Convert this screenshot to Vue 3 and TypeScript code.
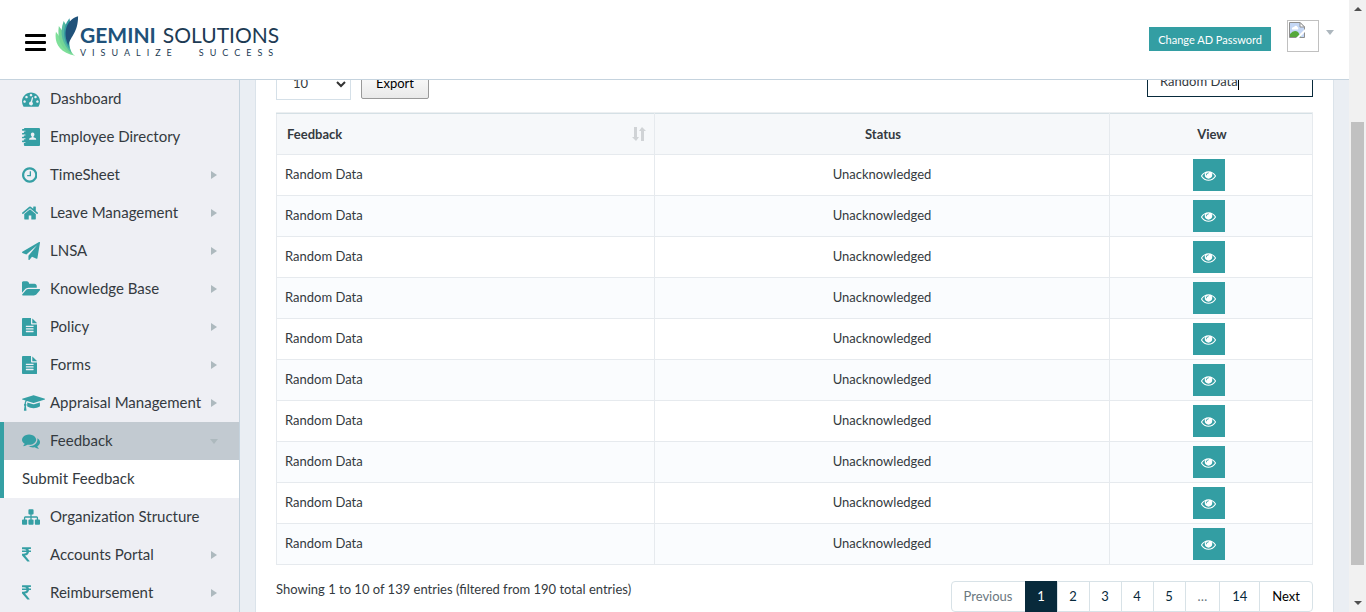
<script setup lang="ts">
import { ref } from 'vue'

interface Icon { w: number; h: number; d: string }
interface MenuItem { label: string; icon: string; arrow?: boolean; active?: boolean; child?: string }

const icons: Record<string, Icon> = {
  dashboard: { w: 1792, h: 1792, d: 'M384 1152q0-53-37.5-90.5t-90.5-37.5-90.5 37.5-37.5 90.5 37.5 90.5 90.5 37.5 90.5-37.5 37.5-90.5zm192-448q0-53-37.5-90.5t-90.5-37.5-90.5 37.5-37.5 90.5 37.5 90.5 90.5 37.5 90.5-37.5 37.5-90.5zm428 481l101-382q6-26-7.5-48.5t-38.5-29.5-48 6.5-30 39.5l-101 382q-60 5-107 43.5t-63 98.5q-20 77 20 146t117 89 146-20 89-117q16-60-6-117t-72-91zm660-33q0-53-37.5-90.5t-90.5-37.5-90.5 37.5-37.5 90.5 37.5 90.5 90.5 37.5 90.5-37.5 37.5-90.5zm-640-640q0-53-37.5-90.5t-90.5-37.5-90.5 37.5-37.5 90.5 37.5 90.5 90.5 37.5 90.5-37.5 37.5-90.5zm448 192q0-53-37.5-90.5t-90.5-37.5-90.5 37.5-37.5 90.5 37.5 90.5 90.5 37.5 90.5-37.5 37.5-90.5zm320 448q0 261-141 483-19 29-54 29h-1402q-35 0-54-29-141-221-141-483 0-182 71-348t191-286 286-191 348-71 348 71 286 191 191 286 71 348z' },
  book: { w: 1792, h: 1792, d: 'M290 0H1690q102 0 102 102V1690q0 102-102 102H290q-102 0-102-102V1500H340v-90H60q-60 0-60-60v-40q0-60 60-60H188V1120H340v-90H60q-60 0-60-60v-40q0-60 60-60H188V740H340v-90H60q-60 0-60-60v-40q0-60 60-60H188V360H340v-90H60q-60 0-60-60v-40q0-60 60-60H188q0-110 102-110zM1060 440c-105 0-180 80-180 190 0 115 50 190 100 225v65l-190 85c-60 30-80 80-80 175h700c0-95-20-145-80-175l-190-85v-65c50-35 100-110 100-225 0-110-75-190-180-190z' },
  clock: { w: 1536, h: 1792, d: 'M896 544v448q0 14-9 23t-23 9h-320q-14 0-23-9t-9-23v-64q0-14 9-23t23-9h224v-352q0-14 9-23t23-9h64q14 0 23 9t9 23zm416 352q0-148-73-273t-198-198-273-73-273 73-198 198-73 273 73 273 198 198 273 73 273-73 198-198 73-273zm224 0q0 209-103 385.5t-279.5 279.5-385.5 103-385.5-103-279.5-279.5-103-385.5 103-385.5 279.5-279.5 385.5-103 385.5 103 279.5 279.5 103 385.5z' },
  home: { w: 1600, h: 1792, d: 'M1376 992v480q0 26-19 45t-45 19h-384v-384h-256v384h-384q-26 0-45-19t-19-45v-480q0-1 .5-3t.5-3l575-474 575 474q1 2 1 6zm223-69l-62 74q-8 9-21 11h-3q-13 0-21-7l-692-577-692 577q-12 8-24 7-13-2-21-11l-62-74q-8-10-7-23.5t11-21.5l719-599q32-26 76-26t76 26l244 204v-195q0-14 9-23t23-9h192q14 0 23 9t9 23v408l219 182q10 8 11 21.5t-7 23.5z' },
  plane: { w: 1792, h: 1792, d: 'M1764 11q33 24 27 64l-256 1536q-5 29-32 45-14 8-31 8-11 0-24-5l-453-185-242 295q-18 23-49 23-13 0-22-4-19-7-30.5-23.5t-11.5-36.5v-349l864-1059-1069 925-395-162q-37-14-40-55-2-40 32-59l1664-960q15-9 32-9 20 0 36 11z' },
  folder: { w: 1815, h: 1792, d: 'M1815 952q0 31-31 66l-336 396q-43 51-120.5 86.5t-143.5 35.5h-1088q-34 0-60.5-13t-26.5-43q0-31 31-66l336-396q43-51 120.5-86.5t143.5-35.5h1088q34 0 60.5 13t26.5 43zm-343-344v160h-832q-94 0-197 47.5t-164 119.5l-337 396-5 6q0-4-.5-12.5t-.5-12.5v-960q0-92 66-158t158-66h320q92 0 158 66t66 158v32h544q92 0 158 66t66 158z' },
  file: { w: 1536, h: 1792, d: 'M1468 476q14 14 28 36h-472v-472q22 14 36 28zm-476 164h544v1056q0 40-28 68t-68 28h-1344q-40 0-68-28t-28-68v-1600q0-40 28-68t68-28h800v544q0 40 28 68t68 28zm160 736v-64q0-14-9-23t-23-9h-704q-14 0-23 9t-9 23v64q0 14 9 23t23 9h704q14 0 23-9t9-23zm0-256v-64q0-14-9-23t-23-9h-704q-14 0-23 9t-9 23v64q0 14 9 23t23 9h704q14 0 23-9t9-23zm0-256v-64q0-14-9-23t-23-9h-704q-14 0-23 9t-9 23v64q0 14 9 23t23 9h704q14 0 23-9t9-23z' },
  cap: { w: 2304, h: 1792, d: 'M1774 836l18 316q4 69-82 128t-235 93.500-323 34.500-323-34.500-235-93.500-82-128l18-316 574 181q22 7 48 7t48-7zM2304 512q0 23-22 31l-1120 352q-4 1-10 1t-10-1l-652-206q-43 34-71 111.500t-34 178.500q63 36 63 109 0 69-58 107l58 433q2 14-8 25-9 11-24 11h-192q-15 0-24-11-10-11-8-25l58-433q-58-38-58-107 0-73 65-111 11-207 98-330l-333-104q-22-8-22-31t22-31l1120-352q4-1 10-1t10 1l1120 352q22 8 22 31z' },
  comments: { w: 1792, h: 1792, d: 'M1408 768q0 139-94 257t-256.500 186.500-353.500 68.500q-86 0-176-16-124 88-278 128-36 9-86 16h-3q-11 0-20.500-8t-11.500-21q-1-3-1-6.500t.5-6.500 2-6l2.500-5 3.500-5.500 4-5 4.500-5 4-4.500q5-6 23-25t26-29.500 22.500-29 25-38.500 20.500-44q-124-72-195-177t-71-224q0-139 94-257t256.500-186.500 353.500-68.500 353.500 68.500 256.500 186.500 94 257zm384 256q0 120-71 224.500t-195 176.500q10 24 20.500 44t25 38.500 22.500 29 26 29.500 23 25q1 1 4 4.500t4.500 5 4 5 3.500 5.500l2.500 5 2 6 .5 6.500-1 6.500q-3 14-13 22t-22 7q-50-7-86-16-154-40-278-128-90 16-176 16-271 0-472-132 58 4 88 4 161 0 309-45t264-129q125-92 192-212t67-254q0-77-23-152 129 71 204 178t75 230z' },
  sitemap: { w: 1792, h: 1792, d: 'M1792 1248v320q0 40-28 68t-68 28h-320q-40 0-68-28t-28-68v-320q0-40 28-68t68-28h96v-192h-512v192h96q40 0 68 28t28 68v320q0 40-28 68t-68 28h-320q-40 0-68-28t-28-68v-320q0-40 28-68t68-28h96v-192h-512v192h96q40 0 68 28t28 68v320q0 40-28 68t-68 28h-320q-40 0-68-28t-28-68v-320q0-40 28-68t68-28h96v-192q0-52 38-90t90-38h512v-192h-96q-40 0-68-28t-28-68v-320q0-40 28-68t68-28h320q40 0 68 28t28 68v320q0 40-28 68t-68 28h-96v192h512q52 0 90 38t38 90v192h96q40 0 68 28t28 68z' },
  rupee: { w: 900, h: 1792, d: 'M898 470v102q0 14-9 23t-23 9h-168q-23 144-129 234t-276 110q167 178 459 536 14 16 4 34-8 18-29 18h-195q-16 0-25-12-306-367-498-571-9-9-9-22v-127q0-13 9.500-22.500t22.500-9.500h112q132 0 212.500-43t102.500-125h-427q-14 0-23-9t-9-23v-102q0-14 9-23t23-9h413q-57-113-268-113h-145q-13 0-22.500-9.500t-9.500-22.500v-133q0-14 9-23t23-9h832q14 0 23 9t9 23v102q0 14-9 23t-23 9h-233q47 61 64 144h171q14 0 23 9t9 23z' },
}

const menu: MenuItem[] = [
  { label: 'Dashboard', icon: 'dashboard' },
  { label: 'Employee Directory', icon: 'book' },
  { label: 'TimeSheet', icon: 'clock', arrow: true },
  { label: 'Leave Management', icon: 'home', arrow: true },
  { label: 'LNSA', icon: 'plane', arrow: true },
  { label: 'Knowledge Base', icon: 'folder', arrow: true },
  { label: 'Policy', icon: 'file', arrow: true },
  { label: 'Forms', icon: 'file', arrow: true },
  { label: 'Appraisal Management', icon: 'cap', arrow: true },
  { label: 'Feedback', icon: 'comments', arrow: true, active: true, child: 'Submit Feedback' },
  { label: 'Organization Structure', icon: 'sitemap' },
  { label: 'Accounts Portal', icon: 'rupee', arrow: true },
  { label: 'Reimbursement', icon: 'rupee', arrow: true },
]

const rows = Array.from({ length: 10 }, (_, id) => ({ id, feedback: 'Random Data', status: 'Unacknowledged' }))
const pages = ['Previous', '1', '2', '3', '4', '5', '…', '14', 'Next']
const current = ref('1')
const pageSize = ref('10')
const search = ref('Random Data')
</script>

<template>
  <div class="app">
    <div class="shell">
      <header class="topbar">
        <button class="burger" type="button" aria-label="Toggle menu"><i></i><i></i><i></i></button>
        <a class="logo" href="#" aria-label="Gemini Solutions">
          <svg class="leaf" viewBox="0 0 26 42" aria-hidden="true">
            <path d="M1 16C-1 27 4 38 21 41C12 36 9 27 1 16Z" fill="#7fe09a" />
            <path d="M4 10C2 24 6 34 19 40C13 31 13 21 4 10Z" fill="#74d596" />
            <path d="M9 5C4 18 8 30 17 38C13 27 17 15 9 5Z" fill="#54b9a1" />
            <path d="M15 2C7 12 8 24 15 34C13 23 18 12 15 2Z" fill="#359ca2" />
            <path d="M24 0C11 4 8 18 14 30C16 21 24 17 24 0Z" fill="#20527a" />
          </svg>
          <span class="words">
            <span class="name"><b>GEMINI</b><span>SOLUTIONS</span></span>
            <span class="tagline"><span>VISUALIZE</span><span>SUCCESS</span></span>
          </span>
        </a>
        <button class="password" type="button">Change AD Password</button>
        <button class="profile" type="button" aria-label="Profile">
          <span class="avatar">
            <svg viewBox="0 0 16 16" aria-hidden="true">
              <path d="M.5.5H11L15.500 5V15.500H.5Z" fill="#c4d7f5" stroke="#8f8f8f" />
              <path d="M11 .5V5H15.500Z" fill="#fff" stroke="#8f8f8f" />
              <path d="M3 7.500Q2.500 5 5 5Q7 2.500 8.500 5Q10 5.500 9 7.500Z" fill="#fff" />
              <path d="M1 15V12Q5 7 9 10L12 15Z" fill="#55a83b" />
              <path d="M7 16L16 7V10L10 16Z" fill="#fff" />
            </svg>
          </span>
          <svg class="caret" viewBox="0 0 8 5" aria-hidden="true"><path d="M0 0H8L4 5Z" /></svg>
        </button>
      </header>

      <div class="body">
        <nav class="sidebar" aria-label="Main">
          <ul>
            <li v-for="item in menu" :key="item.label" :class="{ active: item.active }">
              <a class="item" href="#">
                <span class="glyph">
                  <svg :viewBox="`0 0 ${icons[item.icon].w} ${icons[item.icon].h}`" aria-hidden="true">
                    <path :d="icons[item.icon].d" fill-rule="evenodd" />
                  </svg>
                </span>
                <span class="label">{{ item.label }}</span>
                <svg v-if="item.arrow" class="arrow" viewBox="0 0 8 8" aria-hidden="true">
                  <path :d="item.active ? 'M0 2H8L4 7Z' : 'M1 0L7 4L1 8Z'" />
                </svg>
              </a>
              <a v-if="item.child" class="child" href="#"><span class="label">{{ item.child }}</span></a>
            </li>
          </ul>
        </nav>

        <main class="content">
          <section class="panel">
            <div class="tools">
              <div class="length">
                <select v-model="pageSize" aria-label="Entries per page">
                  <option>10</option><option>25</option><option>50</option>
                </select>
                <svg viewBox="0 0 10 7" aria-hidden="true"><path d="M1 1L5 5L9 1" /></svg>
              </div>
              <button class="export" type="button">Export</button>
              <div class="search">
                <input v-model="search" type="text" aria-label="Search" />
                <i class="cursor"></i>
              </div>
            </div>

            <table>
              <colgroup><col class="c1" /><col class="c2" /><col class="c3" /></colgroup>
              <thead>
                <tr>
                  <th scope="col">
                    <div class="sortable">
                      <span>Feedback</span>
                      <svg viewBox="0 0 14 14" aria-hidden="true">
                        <path d="M2 0H5V10H7L4 14L0 10H2ZM9 14H12V4H14L10 0L7 4H9Z" />
                      </svg>
                    </div>
                  </th>
                  <th scope="col">Status</th>
                  <th scope="col">View</th>
                </tr>
              </thead>
              <tbody>
                <tr v-for="row in rows" :key="row.id">
                  <td>{{ row.feedback }}</td>
                  <td>{{ row.status }}</td>
                  <td class="action">
                    <button class="view" type="button" aria-label="View">
                      <svg viewBox="0 0 1792 1792" aria-hidden="true"><path d="M1664 960q-152-236-381-353 61 104 61 225 0 185-131.500 316.500t-316.500 131.500-316.500-131.500-131.500-316.500q0-121 61-225-229 117-381 353 133 205 333.500 326.500t434.500 121.500 434.500-121.500 333.500-326.500zm-720-384q0-20-14-34t-34-14q-125 0-214.500 89.500t-89.500 214.500q0 20 14 34t34 14 34-14 14-34q0-86 61-147t147-61q20 0 34-14t14-34zm848 384q0 34-20 69-140 230-376.500 368.500t-499.500 138.500-499.500-139-376.500-368q-20-35-20-69t20-69q140-229 376.500-368t499.500-139 499.500 139 376.500 368q20 35 20 69z" /></svg>
                    </button>
                  </td>
                </tr>
              </tbody>
            </table>

            <footer class="foot">
              <p>Showing 1 to 10 of 139 entries (filtered from 190 total entries)</p>
              <div class="pager">
                <button
                  v-for="p in pages"
                  :key="p"
                  type="button"
                  :class="{ on: p === current, muted: p === 'Previous' || p === '…', digit: /^\d$/.test(p) }"
                >{{ p }}</button>
              </div>
            </footer>
          </section>
        </main>
      </div>
    </div>

    <div class="scrollbar" aria-hidden="true">
      <svg viewBox="0 0 8 4"><path d="M0 4L4 0L8 4Z" /></svg>
      <div class="track"><div class="thumb"></div></div>
      <svg viewBox="0 0 8 4"><path d="M0 0H8L4 4Z" /></svg>
    </div>
  </div>
</template>

<style>
body { margin: 0; overflow: hidden; }
</style>

<style scoped>
* { box-sizing: border-box; }
.app { display: flex; height: 100vh; overflow: hidden; font-family: Lato, "Noto Sans", sans-serif; font-size: 13px; color: #343a40; background: #eaeef3; }
button, input, select { font: inherit; color: inherit; margin: 0; }
a { color: inherit; text-decoration: none; }
.shell { flex: 1; min-width: 0; display: flex; flex-direction: column; }

.topbar { position: relative; z-index: 2; flex: none; display: flex; align-items: flex-start; height: 80px; padding: 0 15px 0 25px; background: #fff; border-bottom: 1px solid #c5d3de; }
.burger { display: flex; flex-direction: column; gap: 4px; width: 21px; margin-top: 34px; padding: 0; border: 0; background: none; }
.burger i { height: 3px; background: #000; border-radius: 1px; }
.logo { display: flex; align-items: flex-start; margin: 16px auto 0 9px; }
.leaf { width: 25px; height: 41px; }
.words { display: flex; flex-direction: column; }
.name { display: flex; gap: 7px; margin-top: 7px; font-size: 21px; line-height: 24px; color: #1d3b54; font-weight: 400; }
.name b { color: #20527a; font-weight: 700; }
.tagline { display: flex; justify-content: space-between; font-size: 9px; line-height: 11px; letter-spacing: 6px; color: #1d3b54; }
.password { height: 24px; margin: 27px 16px 0 0; padding: 0 9px; border: 0; background: #339ea3; color: #fff; font-size: 11px; white-space: nowrap; }
.profile { display: flex; gap: 7px; margin-top: 20px; padding: 0; border: 0; background: none; }
.avatar { display: block; width: 32px; height: 32px; border: 1px solid #c0c0c0; padding: 1px; }
.avatar svg { display: block; width: 16px; height: 16px; }
.caret { width: 8px; height: 5px; margin-top: 10px; fill: #adb7be; }

.body { flex: 1; min-height: 0; display: flex; }
.sidebar { flex: none; width: 240px; border-right: 1px solid #c5d3de; background: #eeeff4; overflow: hidden; }
.sidebar ul { margin: 0; padding: 0; list-style: none; }
.item, .child { display: flex; align-items: center; height: 38px; padding: 0 21px 0 22px; font-size: 15px; white-space: nowrap; }
.label { padding-bottom: 2px; }
.glyph { display: flex; width: 28px; flex: none; }
.glyph svg { height: 18px; width: auto; fill: #359fa4; }
.arrow { width: 8px; height: 8px; margin-left: auto; flex: none; fill: #adb9be; }
.active { border-left: 4px solid #35a0a4; }
.active .item, .child { padding-left: 18px; }
.active .item { background: #c2cad1; }
.child { background: #fff; }

.content { flex: 1; min-width: 0; padding: 0 15px; overflow: hidden; }
.panel { padding: 0 20px 20px; background: #fff; border: 1px solid #dbe3ea; border-top: 0; }
.tools { display: flex; align-items: flex-end; height: 20px; margin-bottom: 13px; }
.length { position: relative; width: 75px; }
.length select { display: block; width: 100%; height: 34px; padding: 0 16px; border: 1px solid #d5e0e8; border-radius: 0; background: #fff; appearance: none; }
.length svg { position: absolute; right: 5px; top: 15px; width: 10px; height: 7px; fill: none; stroke: #333; stroke-width: 2; }
.export { height: 30px; margin: 0 auto 1px 10px; width: 68px; padding: 0 0 2px; border: 1px solid #999; border-radius: 2px; background: linear-gradient(#fff, #e9e9e9); color: #000; }
.search { position: relative; width: 166px; margin-bottom: 3px; }
.search input { display: block; width: 100%; height: 30px; padding: 0 12px 2px; border: 1px solid #082a3b; border-radius: 0; background: #fff; outline: 0; }
.cursor { position: absolute; left: 91px; top: 7px; width: 1px; height: 16px; background: #000; }

table { width: 100%; border-collapse: collapse; table-layout: fixed; border: 1px solid #e6eaee; box-shadow: 0 -1px 0 #eceff1; }
.c1 { width: 36.5%; }
.c2 { width: 43.9%; }
.c3 { width: 19.6%; }
th, td { height: 41px; padding: 0 8px; border: 1px solid #e6eaee; border-top-color: #d5e0e5; text-align: center; }
th { padding: 0 8px 0 10px; background: #f6f8fa; font-weight: 700; }
td { padding-bottom: 2px; }
td:first-child { text-align: left; }
tbody tr:nth-child(even) { background: #fafcfe; }
.sortable { display: flex; align-items: center; justify-content: space-between; }
.sortable svg { width: 14px; height: 14px; fill: #d0d3d6; }
.view { display: flex; align-items: center; justify-content: center; width: 32px; height: 32px; margin: 0 auto; padding: 0; border: 0; background: #339ea3; }
.action { padding: 0 12px 0 8px; }
.view svg { width: 15px; height: 15px; fill: #fff; }

.foot { display: flex; align-items: flex-start; justify-content: space-between; padding-top: 16px; }
.foot p { margin: 0; line-height: 16px; }
.pager { display: flex; }
.pager button { height: 31px; margin-left: -1px; padding: 0 12px 2px; border: 1px solid #d8e2e7; background: #fff; color: #082a3b; }
.pager .digit { width: 33px; padding: 0 0 2px; }
.pager button:first-child { border-radius: 4px 0 0 4px; }
.pager button:last-child { border-radius: 0 4px 4px 0; color: #000; }
.pager .muted { color: #6b7780; }
.pager .on { background: #082a3b; border-color: #082a3b; color: #fff; }

.scrollbar { flex: none; display: flex; flex-direction: column; align-items: center; justify-content: space-between; width: 17px; padding: 7px 0; background: #f1f1f1; }
.scrollbar svg { width: 8px; height: 4px; fill: #505050; }
.track { flex: 1; display: flex; flex-direction: column; justify-content: flex-end; width: 13px; padding: 0 0 36px; }
.thumb { height: 80%; background: #c1c1c1; }
</style>
